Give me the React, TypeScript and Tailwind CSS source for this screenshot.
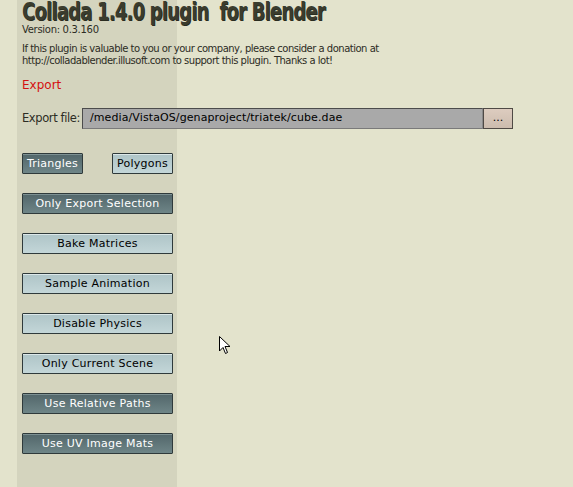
import React from 'react';

const OPTIONS = [
  { label: 'Only Export Selection', on: true },
  { label: 'Bake Matrices', on: false },
  { label: 'Sample Animation', on: false },
  { label: 'Disable Physics', on: false },
  { label: 'Only Current Scene', on: false },
  { label: 'Use Relative Paths', on: true },
  { label: 'Use UV Image Mats', on: true },
];

function ToggleButton({ label, on, width }: { label: string; on: boolean; width: string }) {
  return (
    <div
      className={
        'h-[21px] flex items-center justify-center border border-[#2f3a3b] rounded-[1px] text-[11px] tracking-[0.25px] leading-none whitespace-nowrap ' +
        width +
        (on
          ? ' bg-[linear-gradient(to_bottom,#52666a,#6e8587)] text-white shadow-[inset_0_1px_0_#7d9193]'
          : ' bg-[linear-gradient(to_bottom,#aec4c7,#c3d6d8)] text-black shadow-[inset_0_1px_0_#dce8e9]')
      }
    >
      {label}
    </div>
  );
}

export default function App() {
  return (
    <div
      className="relative w-[573px] h-[487px] overflow-hidden pl-[22px] bg-[linear-gradient(to_right,#e3e3cc_17px,#d4d4be_17px,#d4d4be_177px,#e3e3cc_177px)] text-[#2c2c24]"
      style={{ fontFamily: '"DejaVu Sans", sans-serif' }}
    >
      {/* Titre */}
      <div className="h-[24px] pt-[1px]">
        <div
          className="inline-block origin-left scale-x-[0.8] whitespace-nowrap text-[25px] leading-[22px] font-black tracking-[-1px] text-[#3a3c2e] [text-shadow:1px_1px_0_#2a2c20]"
          style={{ fontFamily: '"DejaVu Sans Condensed", "DejaVu Sans", sans-serif' }}
        >
          Collada 1.4.0 plugin&nbsp; for Blender
        </div>
      </div>
      <div className="h-[11px] text-[10px] leading-[11px] tracking-[-0.3px]">Version: 0.3.160</div>

      <div className="mt-[8px] text-[10px] leading-[12px] tracking-[-0.5px]">
        <div>If this plugin is valuable to you or your company, please consider a donation at</div>
        <div>http://colladablender.illusoft.com to support this plugin. Thanks a lot!</div>
      </div>

      <div className="mt-[11px] h-[14px] text-[12px] leading-[14px] text-[#d41010]">Export</div>

      {/* Fichier d'export */}
      <div className="mt-[16px] flex items-center h-[21px]">
        <span className="w-[60px] whitespace-nowrap text-[11.5px] tracking-[-0.4px]">Export file:</span>
        <div className="w-[401px] h-[21px] flex items-center pl-[7px] bg-[#a9a9a9] border border-[#4c4c4c] border-r-[#8a8a8a] border-b-[#7a7a7a] text-black text-[11px] tracking-[0.1px] whitespace-nowrap">
          /media/VistaOS/genaproject/triatek/cube.dae
        </div>
        <div className="w-[30px] h-[21px] flex items-end justify-center bg-[linear-gradient(to_bottom,#ddccbf,#ccbcae)] border border-[#4f4a45] text-black text-[11px] leading-none pb-[5px]">
          ...
        </div>
      </div>

      {/* Options */}
      <div className="mt-[24px] flex flex-col gap-[19px] w-[151px]">
        <div className="flex justify-between">
          <ToggleButton label="Triangles" on={true} width="w-[61px]" />
          <ToggleButton label="Polygons" on={false} width="w-[61px]" />
        </div>
        {OPTIONS.map((o) => (
          <ToggleButton key={o.label} label={o.label} on={o.on} width="w-[151px]" />
        ))}
      </div>

      {/* Curseur */}
      <svg className="absolute left-[219px] top-[336px]" width="12" height="20" viewBox="0 0 12 20">
        <path d="M0.5 0.5 L0.5 15 L4 11.5 L6.5 17.5 L8.5 16.5 L6 10.5 L11 10.5 Z" fill="#fff" stroke="#000" strokeWidth="1" />
      </svg>
    </div>
  );
}
